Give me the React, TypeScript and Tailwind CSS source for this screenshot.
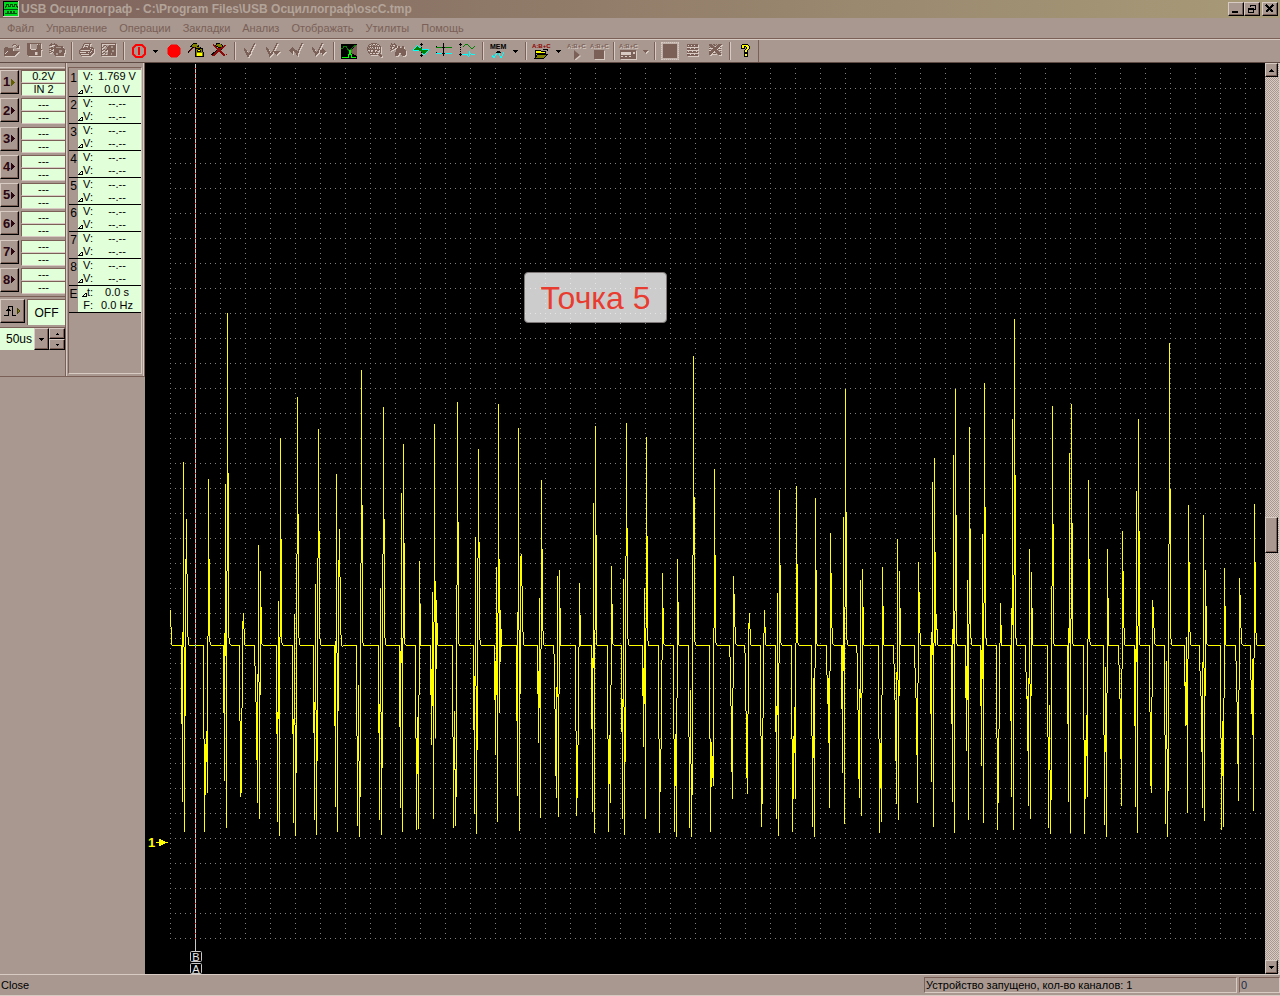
import { Fragment, type ReactNode } from "react";

const COLORS: Record<string, string> = {
  k: "#000000",
  r: "#8b0a0a",
  R: "#ff0000",
  y: "#ffff00",
  o: "#808000",
  g: "#008000",
  G: "#00ff00",
  c: "#00ffff",
  d: "#7b6058",
  l: "#d8cbc3",
  s: "#a8988f",
};

function pathsOf(rows: string[]) {
  const out: Record<string, string> = {};
  rows.forEach((row, y) => {
    let x = 0;
    while (x < row.length) {
      const ch = row[x];
      let end = x + 1;
      while (end < row.length && row[end] === ch) end++;
      if (ch !== ".") out[ch] = (out[ch] ?? "") + `M${x} ${y}h${end - x}v1h${x - end}z`;
      x = end;
    }
  });
  return out;
}

function Pix({ rows, etched = false }: { rows: string[]; etched?: boolean }) {
  const paths = pathsOf(rows);
  return (
    <g shapeRendering="crispEdges">
      {etched && (
        <g transform="translate(1 1)" fill={COLORS.l}>
          {Object.entries(paths).map(([k, d]) => (k === "d" ? <path key={k} d={d} /> : null))}
        </g>
      )}
      {Object.entries(paths).map(([k, d]) => (
        <path key={k} d={d} fill={COLORS[k]} />
      ))}
    </g>
  );
}

const OPEN = [
  "................",
  "..........ddd...",
  ".........d...d.d",
  "..............dd",
  "..ddd........ddd",
  ".ddddddddd......",
  ".ddddddddd......",
  ".ddddddddd......",
  ".ddd.ddddddddddd",
  ".dd.dddddddddddl",
  ".d.dddddddddddl.",
  ".ddddddddddddl..",
  ".dddddddddddl...",
];
const SAVE = [
  ".dddddddddddddd.",
  ".dddlssssssldsd.",
  ".dddlssssssdddd.",
  ".dddlssssssdddd.",
  ".dddlssssssdddd.",
  ".dddlssssssdddd.",
  ".ddddllllldddddd",
  ".dddddddddddddd.",
  ".dddddddddddddd.",
  ".ddddddddllsddd.",
  ".ddddddddllsddd.",
  ".ddddddddllsddd.",
  "..ddddddddddddd.",
];
const SAVES = [
  "..d..d..........",
  ".ddddddd........",
  "ddd...ddd.......",
  ".....ddddddddd..",
  "..dd.ddsssssdd..",
  "ddddddddddddddd.",
  "..dd.ddddddddddd",
  "dd...dddddsssddd",
  "..dd.dddddsssddd",
  "dd..ddddddssdddd",
  ".....ddssdddddd.",
  ".....ddssdddddd.",
  "......ddddddddd.",
];
const PRINT = [
  "......ddddddd...",
  ".....d.....d....",
  ".....d.ddd.d....",
  "....d.....dd....",
  "....d.ddd.ddddd.",
  "...ddddddddd.ddd",
  "..dddddddddddd.d",
  ".d..........dddd",
  ".dddddddddddd.dd",
  ".d......dd.d.ddd",
  ".dddddddddddddd.",
  "..d........ddd..",
  "...dddddddddd...",
];
const PREVIEW = [
  "ddddddddddddddd.",
  "d.............d.",
  "d..dd...ddddddd.",
  "d.d..d.dddssddd.",
  "dd....ddddssddd.",
  "d.....ddddddddd.",
  "d.dd.dddddddddd.",
  "dd..dd.ddddssdd.",
  "d......ddddssdd.",
  "d.dd...dddddddd.",
  "dd..d..dddsdddd.",
  "d......dddsdddd.",
  "ddddddddddddddd.",
];
const REC_SAVE = [
  ".....kkkk.......",
  "....koooo.......",
  "...kooooook.....",
  "..kkoooookk.....",
  "....kkrkooook...",
  "...kr..kkkkkkkk.",
  "..kr...kookkook.",
  ".kr....kokyykok.",
  "kr.....kokkkkok.",
  "k......koooooook",
  ".......koyyyyyok",
  ".......koyyyyyok",
  ".......koyyyyyok",
  ".......kkkkkkkkk",
];
const REC_CUT = [
  ".....kkkk.......",
  "..r..kooook.....",
  "..rrkooooook.rr.",
  "...rrkkooookrr..",
  "....rr.kkkrrr...",
  ".....rrrrrrr....",
  "......rrrrk.....",
  ".....krrrr......",
  "....krrrrrr.....",
  "..kkrrr..rrr....",
  ".kkrrr....rrr...",
  "kkrrr......rrr.r",
  ".rrr........rr..",
];
const CHECK = [
  "............d...",
  "...........dd...",
  "...........d....",
  "..........dd....",
  "..........d.....",
  "..d......dd.....",
  "..dd.....d......",
  "..ddd...dd......",
  "...dd...d.......",
  "...ddd.dd.......",
  "....ddddd.......",
  "....dddd........",
  ".....dd.........",
  ".....dd.........",
];
const CHECK_DOWN = [
  "...........dd...",
  "...........d....",
  "..........dd....",
  "..........d.....",
  ".d.......dd.....",
  ".dd......d......",
  ".ddd....dd......",
  "..dd....d.......",
  "..ddd..dddddddd.",
  "...dd.dd.ddddd..",
  "...ddddd..ddd...",
  "....ddd....d....",
  "....dd..........",
  "....d...........",
];
const CHECK_LEFT = [
  ".............dd.",
  ".............d..",
  "............dd..",
  "............d...",
  "....d......dd...",
  "...ddd.....d....",
  "..ddddd...dd....",
  ".dddddddd.d.....",
  "..ddd.ddddd.....",
  "...dd..dddd.....",
  "....d...dd......",
  "........dd......",
  ".........d......",
];
const CHECK_RIGHT = [
  "..........dd....",
  "..........d.....",
  ".........dd.....",
  ".........d......",
  ".d......dd......",
  ".dd.....d..d....",
  ".ddd...dd..dd...",
  "..dd...d.ddddd..",
  "..ddd.dd.dddddd.",
  "...ddddd.ddddd..",
  "....ddd....dd...",
  "....dd.....d....",
  "....d...........",
];
const GLOBE = [
  "....dddddd......",
  "..dd.d..d.dd....",
  ".d..d.dd.d..d...",
  ".ddddddddddddd..",
  "d.d.d.dd.d.d.d..",
  "dd.d.d.d.d.d.d..",
  "dddddddddddddd..",
  "d..d..dd..dd.d..",
  ".d.d..dd.d...d..",
  ".dddddddddd..d..",
  "..d..d..d...d...",
  "...ddddddd.ddd..",
  "............ddd.",
  ".............dd.",
];
const BINOC = [
  ".d..d...........",
  ".ddddd..........",
  "d.d..dd.........",
  "dddd.dd.dd..dd..",
  ".d..ddd.dd..dd..",
  "dd.dd..ddddddd..",
  ".dd...ddddddddd.",
  "d.....dddddddddd",
  "......dddddddddd",
  ".....ddddddddddd",
  ".....dddd..ddddd",
  ".....dddd..ddddd",
  ".....ddd....ddd.",
];
const WAVE_FILL = [
  "........k.......",
  ".......kkk......",
  "....c...k.......",
  "...cgc..........",
  "..cgggcck.......",
  ".cggggggg.......",
  "cggggggggccccccc",
  "ccccccgggggggggc",
  "........ggggggc.",
  "........kggggc..",
  ".........cggc...",
  "........k.cc....",
  ".......kkk......",
  "........k.......",
];
const AXIS_H = [
  ".......k........",
  ".......k........",
  ".......k........",
  "k......k........",
  "ggggggkkkggggggg",
  ".......k........",
  ".......k........",
  ".......k........",
  ".......k........",
  "k......k........",
  "cccccckkkccccccc",
  ".......k........",
  ".......k........",
];
const AXIS_V = [
  ".k..............",
  "kkk...ggg.......",
  ".k...g...g......",
  "....g.....g....g",
  ".k.........g..g.",
  "............gg..",
  ".k..............",
  "................",
  ".k........c.....",
  "..........c.....",
  ".k........cc....",
  "kkkcccccc.c.cccc",
  ".k......c.c.....",
  ".........c......",
];
const QUESTION = [
  "...kkkkkk...",
  "..kyyyyyyk..",
  "..kyykkyyyk.",
  "..kyyk.kyyk.",
  "..kkkk.kyyk.",
  "......kyyk..",
  ".....kyyk...",
  ".....kyyk...",
  ".....kkkk...",
  ".....kkkk...",
  ".....kyyk...",
  ".....kyyk...",
  ".....kkkk...",
];
const TABLE_ICON = [
  "................",
  "...ddddddddddd..",
  "...dlddlddlddd..",
  "...ddddddddddd..",
  "...lllllllllll..",
  "...dddldddlddd..",
  "...ddddddddddd..",
  "...lllllllllll..",
  "...dldddldddld..",
  "...ddddddddddd..",
  "...lllllllllll..",
  "...dddldddlddd..",
  "...ddddddddddd..",
];
const TABLE_X = [
  "................",
  "..ddd.dd.d.dddd.",
  "..dddd.dd.dddd..",
  "...dddd..dddd...",
  "..d.ddddddddld..",
  "..lll.ddddd.ll..",
  "..dd.ddddd.ddd..",
  "..l.ddddddd.ll..",
  "..ddddd.dddd.d..",
  "..dddd.l.dddd...",
  "..ddd.ddd.dddd..",
  "..dd.ll.ll.ddd..",
];

function Icon({ rows, etched }: { rows: string[]; etched?: boolean }) {
  return (
    <svg width="17" height="16" viewBox="0 0 17 16" className="shrink-0" aria-hidden="true">
      <Pix rows={rows} etched={etched} />
    </svg>
  );
}

function Tool({ label, children }: { label: string; children: ReactNode }) {
  return (
    <button type="button" aria-label={label} className="flex h-full w-[23px] shrink-0 items-center justify-center">
      {children}
    </button>
  );
}

function DropArrow({ label, dim = false }: { label: string; dim?: boolean }) {
  return (
    <button type="button" aria-label={label} className="flex h-full w-3 shrink-0 items-center justify-center">
      <svg width="6" height="5" viewBox="0 0 6 5" shapeRendering="crispEdges" aria-hidden="true">
        {dim && <path d="M1 2h5v1h-1v1h-1v1h-1v-1h-1v-1h-1z" fill="#d8cbc3" />}
        <path d="M0 1h5v1h-1v1h-1v1h-1v-1h-1v-1h-1z" fill={dim ? "#7b6058" : "#000"} />
      </svg>
    </button>
  );
}

function Sep({ wide = false }: { wide?: boolean }) {
  return (
    <span className={wide ? "flex w-2 shrink-0 justify-center" : "flex w-1.5 shrink-0 justify-center"}>
      <span className="h-[18px] w-0.5 border-l border-r border-l-[#7b6058] border-r-[#d8cbc3]" />
    </span>
  );
}

function AbcIcon({ color, children, etched = false }: { color: string; children: ReactNode; etched?: boolean }) {
  return (
    <svg width="21" height="17" viewBox="-1 0 21 17" className="shrink-0" aria-hidden="true">
      {etched && (
        <text x="1" y="6" fontSize="6" fontWeight="700" fontFamily="Liberation Sans, sans-serif" fill="#d8cbc3" aria-hidden="true">
          A:B+C
        </text>
      )}
      <text x="0" y="5" fontSize="6" fontWeight="700" fontFamily="Liberation Sans, sans-serif" fill={color}>
        A:B+C
      </text>
      {children}
    </svg>
  );
}

function Toolbar() {
  return (
    <div className="flex h-6 items-stretch border-b border-t border-b-[#5f4a44] border-t-[#d8cbc3]">
      <div className="flex items-center border-r border-[#7b6058] pr-0.5">
        <Tool label="Открыть"><Icon rows={OPEN} etched /></Tool>
        <Tool label="Сохранить"><Icon rows={SAVE} etched /></Tool>
        <Tool label="Сохранить все"><Icon rows={SAVES} etched /></Tool>
        <Sep />
        <Tool label="Печать"><Icon rows={PRINT} etched /></Tool>
        <Tool label="Просмотр"><Icon rows={PREVIEW} etched /></Tool>
        <Sep />
        <Tool label="Старт">
          <svg width="16" height="16" viewBox="0 0 16 16" fill="none" stroke="#ff0000" strokeWidth="2" aria-hidden="true">
            <path d="M5 2h6l3 3v6l-3 3H5l-3-3V5z" />
            <path d="M8 4v8" />
          </svg>
        </Tool>
        <DropArrow label="Режим старта" />
        <Tool label="Запись">
          <svg width="14" height="14" viewBox="0 0 14 14" aria-hidden="true">
            <path d="M4 1h6l3 3v6l-3 3H4l-3-3V4z" fill="#ff0000" stroke="#ff0000" />
          </svg>
        </Tool>
        <Tool label="Сохранить запись"><Icon rows={REC_SAVE} /></Tool>
        <Tool label="Удалить запись"><Icon rows={REC_CUT} /></Tool>
        <Sep wide />
        <Tool label="Закладка"><Icon rows={CHECK} etched /></Tool>
        <Tool label="Список закладок"><Icon rows={CHECK_DOWN} etched /></Tool>
        <Tool label="Предыдущая закладка"><Icon rows={CHECK_LEFT} etched /></Tool>
        <Tool label="Следующая закладка"><Icon rows={CHECK_RIGHT} etched /></Tool>
        <Sep />
        <Tool label="Спектр">
          <svg width="16" height="16" viewBox="0 0 16 16" shapeRendering="crispEdges" fill="none" aria-hidden="true">
            <path d="M0 1h16v15H0z" fill="#000" />
            <path d="M16 1v12L8 9z" fill="#7b6058" />
            <path d="M0 5h2l1-2h2l3 5h1l3-4 3-2" stroke="#008000" />
            <path d="M1 14.500h6V11h1V7h1v4h1v3.500h5" stroke="#00ff00" />
          </svg>
        </Tool>
        <span className="w-1 shrink-0" />
        <Tool label="Обзор"><Icon rows={GLOBE} etched /></Tool>
        <Tool label="Поиск"><Icon rows={BINOC} etched /></Tool>
        <Tool label="Сигнал"><Icon rows={WAVE_FILL} /></Tool>
        <Tool label="Горизонтальные оси"><Icon rows={AXIS_H} /></Tool>
        <Tool label="Вертикальные оси"><Icon rows={AXIS_V} /></Tool>
        <Sep wide />
        <Tool label="Память">
          <svg width="17" height="17" viewBox="0 0 17 17" className="shrink-0" aria-hidden="true">
            <text x="0" y="6" fontSize="7" fontWeight="700" fontFamily="Liberation Sans, sans-serif" fill="#000">MEM</text>
            <g shapeRendering="crispEdges" fill="none">
              <path d="M2 12l2 3 4-7 3 7 3-6" stroke="#00ffff" />
              <path d="M6 10h5v-1h-1v-1h-3v1h-1z" fill="#000" />
            </g>
          </svg>
        </Tool>
        <DropArrow label="Меню памяти" />
        <Sep wide />
        <Tool label="Открыть выражение">
          <AbcIcon color="#900000">
            <g shapeRendering="crispEdges">
              <path d="M3 7h5l1 1h4v2H3z" fill="#ffff00" stroke="#000" />
              <path d="M3 15V8" stroke="#000" />
              <path d="M3 15l3-4h10l-4 4z" fill="#808000" stroke="#000" />
              <path d="M11 6h4v2" fill="none" stroke="#000" />
            </g>
          </AbcIcon>
        </Tool>
        <DropArrow label="Меню выражений" />
        <Tool label="Запустить выражение">
          <AbcIcon color="#7b6058" etched>
            <path d="M8 8l6 5-6 5z" fill="#d8cbc3" />
            <path d="M7 7l6 5-6 5z" fill="#7b6058" />
          </AbcIcon>
        </Tool>
        <Tool label="Остановить выражение">
          <AbcIcon color="#7b6058" etched>
            <path d="M5 8h10v9H5z" fill="#d8cbc3" />
            <path d="M4 7h10v9H4z" fill="#7b6058" />
          </AbcIcon>
        </Tool>
        <Sep />
        <Tool label="Панель выражения">
          <AbcIcon color="#7b6058" etched>
            <g shapeRendering="crispEdges">
              <path d="M2 8h16v9H2z" fill="#d8cbc3" />
              <path d="M1 7h16v9H1z" fill="#7b6058" />
              <path d="M2 9h10v3H2zM14 9h2v2h-2zM2 13h2v1H2zM6 13h2v1H6zM10 13h2v1h-2z" fill="#d8cbc3" />
            </g>
          </AbcIcon>
        </Tool>
        <DropArrow label="Меню панели" dim />
        <Sep />
        <Tool label="Остановить">
          <span className="flex size-[18px] items-center justify-center border border-dotted border-[#d8cbc3] bg-[#c0b2aa]">
            <span className="size-3.5 bg-[#7b6058]" />
          </span>
        </Tool>
        <Tool label="Таблица"><Icon rows={TABLE_ICON} etched /></Tool>
        <Tool label="Очистить таблицу"><Icon rows={TABLE_X} etched /></Tool>
        <Sep />
        <Tool label="Справка">
          <svg width="12" height="14" viewBox="0 0 12 14" aria-hidden="true"><Pix rows={QUESTION} /></svg>
        </Tool>
      </div>
    </div>
  );
}

const RAISED =
  "border border-l-[#d8cbc3] border-t-[#d8cbc3] border-b-black border-r-black bg-[#a8988f] shadow-[inset_-1px_-1px_0_#7b6058]";

function TitleBar() {
  return (
    <header className="flex h-[18px] items-center bg-linear-to-r from-[#7e635d] to-[#a89b78] pl-[3px] pr-0.5">
      <svg width="16" height="16" viewBox="0 0 16 16" shapeRendering="crispEdges" className="shrink-0" aria-hidden="true">
        <path d="M0 0h16v16H0z" fill="#d8cbc3" />
        <path d="M0 0h15v15H0z" fill="#000" />
        <path d="M1 1h14v14H1z" fill="#00d820" />
        <path d="M2 7V5h1V3h2v2h2V3h2v2h2V3h2v2h1v2" fill="none" stroke="#004800" />
        <path d="M2 12.500h2v-2h1v2h2v-2h1v2h2v-2h1v2h3M1 8.500h14" fill="none" stroke="#005010" />
      </svg>
      <h1 className="ml-0.5 flex-1 truncate text-[12px] font-bold leading-[18px] text-[#b3a49a]">
        USB Осциллограф - C:\Program Files\USB Осциллограф\oscC.tmp
      </h1>
      <div className="flex">
        <button type="button" aria-label="Свернуть" className={`flex h-3.5 w-4 items-center justify-center ${RAISED}`}>
          <svg width="12" height="10" viewBox="0 0 12 10" shapeRendering="crispEdges"><path d="M2 7h6v2H2z" /></svg>
        </button>
        <button type="button" aria-label="Восстановить" className={`flex h-3.5 w-4 items-center justify-center ${RAISED}`}>
          <svg width="12" height="10" viewBox="0 0 12 10" shapeRendering="crispEdges" fill="none" stroke="#000">
            <path d="M4.500 3V1.500h5v4H8M4 1.500h6M2.500 4.500h5v4h-5zM2 5h6" />
          </svg>
        </button>
        <button type="button" aria-label="Закрыть" className={`ml-0.5 flex h-3.5 w-4 items-center justify-center ${RAISED}`}>
          <svg width="12" height="10" viewBox="0 0 12 10" shapeRendering="crispEdges" fill="none" stroke="#000" strokeWidth="1.500">
            <path d="M2 1l7 7M9 1L2 8" />
          </svg>
        </button>
      </div>
    </header>
  );
}

const MENU = ["Файл", "Управление", "Операции", "Закладки", "Анализ", "Отображать", "Утилиты", "Помощь"];

function MenuBar() {
  return (
    <nav className="flex h-[21px] items-center gap-3 border-b border-[#7b6058] px-[7px] text-[11px] leading-5 text-[#7b6058]">
      {MENU.map((m) => (
        <button key={m} type="button">{m}</button>
      ))}
    </nav>
  );
}

const CHANNELS = [
  { n: 1, range: "0.2V", input: "IN 2" },
  ...[2, 3, 4, 5, 6, 7, 8].map((n) => ({ n, range: "---", input: "---" })),
];

const CELL =
  "block h-[13px] w-full border-b border-l border-t border-b-[#d8cbc3] border-l-[#7b6058] border-t-[#7b6058] bg-[#e1ffd9] text-center text-[11px] leading-[11px]";

function ChannelPanel() {
  return (
    <section className="flex w-[66px] flex-col border-b border-r border-[#7b6058]">
      <div className="mt-1 h-[3px] shrink-0 border-b border-t border-b-[#7b6058] border-t-[#d8cbc3]" />
      <div className="flex h-[226px] flex-col">
        {CHANNELS.map((c) => (
          <div key={c.n} className="flex flex-1 items-start justify-between">
            <button type="button" className={`flex h-6 w-[19px] items-center justify-center gap-px text-[13px] font-bold text-[#2c0610] ${RAISED}`}>
              {c.n}
              <svg width="5" height="7" viewBox="0 0 5 7" shapeRendering="crispEdges" aria-hidden="true">
                <path d="M0 0l4 3.500L0 7z" fill={c.n === 1 ? "#606000" : "#2c0610"} />
              </svg>
            </button>
            <div className="w-11">
              <button type="button" aria-label={`Диапазон ${c.n}`} className={CELL}>{c.range}</button>
              <button type="button" aria-label={`Вход ${c.n}`} className={CELL}>{c.input}</button>
            </div>
          </div>
        ))}
      </div>
      <div className="flex items-start justify-between border-t border-[#7b6058] pt-0.5">
        <button type="button" aria-label="Синхронизация" className={`flex h-6 w-[25px] items-center justify-center ${RAISED}`}>
          <svg width="17" height="12" viewBox="0 0 17 12" shapeRendering="crispEdges" fill="none" stroke="#000" aria-hidden="true">
            <path d="M0 10.500h4.500V1.500h4v9H12M2 5.500h5M3 4.500h3" />
            <path d="M13 3l3 3-3 3z" fill="#808000" stroke="#404000" />
          </svg>
        </button>
        <button type="button" className="h-[26px] w-[38px] border-l border-t border-[#7b6058] bg-[#e1ffd9] text-[12px]">OFF</button>
      </div>
      <div className="mt-0.5 flex h-[23px] border-t border-[#7b6058]">
        <div className="relative flex h-[22px] w-[49px]">
          <select aria-label="Развёртка" className="w-full appearance-none bg-[#e1ffd9] pl-1.5 text-[12px]">
            <option>50us</option>
          </select>
          <span className={`pointer-events-none absolute right-0 top-0 flex h-full w-[15px] items-center justify-center ${RAISED}`}>
            <svg width="5" height="3" viewBox="0 0 5 3" shapeRendering="crispEdges"><path d="M0 0h5v1h-1v1h-1v1h-1v-1h-1v-1h-1z" /></svg>
          </span>
        </div>
        <div className="flex w-4 flex-col">
          <button type="button" aria-label="Больше" className={`flex flex-1 items-center justify-center ${RAISED}`}>
            <svg width="3" height="2" viewBox="0 0 3 2" shapeRendering="crispEdges"><path d="M1 0h1v1h1v1H0V1h1z" /></svg>
          </button>
          <button type="button" aria-label="Меньше" className={`flex flex-1 items-center justify-center ${RAISED}`}>
            <svg width="3" height="2" viewBox="0 0 3 2" shapeRendering="crispEdges"><path d="M0 0h3v1h-1v1h-1v-1h-1z" /></svg>
          </button>
        </div>
      </div>
    </section>
  );
}

const READOUTS = [
  { id: "1", first: "V:", value: "1.769 V", second: "V:", diff: "0.0 V" },
  ...["2", "3", "4", "5", "6", "7", "8"].map((id) => ({ id, first: "V:", value: "--.--", second: "V:", diff: "--.--" })),
  { id: "E", first: "t:", value: "0.0 s", second: "F:", diff: "0.0 Hz" },
];

function Label({ text, delta }: { text: string; delta: boolean }) {
  return (
    <span className="flex items-center justify-end">
      {delta && (
        <svg width="5" height="5" viewBox="0 0 5 5" className="mt-1" shapeRendering="crispEdges" aria-hidden="true">
          <path d="M0 4h5v1H0zM1 3h1v1H1zM2 2h1v1H2zM3 1h2v3H4V2H3z" />
        </svg>
      )}
      {text}
    </span>
  );
}

function ReadoutPanel() {
  return (
    <section className="w-[79px] border-b border-r border-[#7b6058] px-0.5 pb-0.5 pt-1 shadow-[inset_1px_0_0_#d8cbc3,inset_-1px_0_0_#d8cbc3]">
      <div className="h-full border border-b-[#d8cbc3] border-l-[#7b6058] border-r-[#d8cbc3] border-t-[#7b6058] pt-0.5">
        <table className="w-full border-separate border-spacing-0 text-[11px] leading-[13px]">
          <tbody>
            {READOUTS.map((r) => (
              <Fragment key={r.id}>
                <tr>
                  <th rowSpan={2} scope="rowgroup" className="w-[9px] border-b border-black p-0 pt-0.5 align-top text-[12px] font-normal">{r.id}</th>
                  <td className="w-[13px] bg-[#e1ffd9] p-0"><Label text={r.first} delta={r.id === "E"} /></td>
                  <td className="bg-[#e1ffd9] p-0 text-center">{r.value}</td>
                </tr>
                <tr>
                  <td className="border-b border-black bg-[#e1ffd9] p-0"><Label text={r.second} delta={r.id !== "E"} /></td>
                  <td className="border-b border-black bg-[#e1ffd9] p-0 text-center">{r.diff}</td>
                </tr>
              </Fragment>
            ))}
          </tbody>
        </table>
      </div>
    </section>
  );
}

/* Bursts of samples: first column, then one level per column. Idle level is 645. */
const IDLE = 645;
const BURSTS: number[][] = [
  [170, 610, 644],
  [182, 802, 462, 832, 599, 519, 629, 644, 646],
  [204, 832, 757, 731, 793, 479, 639],
  [224, 781, 484, 828, 313, 632, 643],
  [240, 797, 788, 628, 613],
  [255, 687, 717, 803, 545, 819, 571, 643],
  [277, 822, 601, 836, 438, 640],
  [293, 823, 614, 836, 710, 397, 631, 644],
  [314, 820, 584, 835, 686, 429, 633, 644],
  [335, 807, 474, 832, 590, 529, 625, 645, 646],
  [357, 826, 685, 837, 756, 370, 640, 646],
  [379, 820, 588, 835, 701, 407, 631, 644],
  [400, 808, 493, 832, 444, 642],
  [416, 830, 717, 829, 561, 646],
  [431, 745, 592, 819, 424, 738, 600],
  [453, 828, 711, 826, 768, 402, 642, 646],
  [474, 814, 537, 834, 666, 449, 635],
  [495, 755, 567, 822, 404, 713, 610, 647],
  [517, 796, 428, 831, 557, 554, 618],
  [538, 743, 598, 818, 480, 617, 644],
  [554, 663, 754, 798, 576, 817, 570, 646],
  [576, 816, 779, 710, 583, 646],
  [592, 812, 503, 833, 426, 644, 646],
  [608, 832, 735, 803, 566, 642],
  [622, 819, 579, 835, 689, 423, 633],
  [643, 747, 588, 819, 437, 635, 646],
  [659, 833, 751, 746, 573, 643],
  [674, 832, 734, 837, 559],
  [689, 828, 690, 837, 753, 356, 638],
  [710, 832, 742, 769, 786, 469, 641],
  [730, 668, 744, 799, 576, 612, 642],
  [745, 661, 761, 794, 633, 613, 644],
  [761, 827, 781, 655, 610, 644],
  [776, 819, 593, 836, 490, 640],
  [792, 832, 765, 707, 799, 486, 641],
  [812, 827, 678, 837, 498, 642, 646],
  [827, 704, 678, 808, 533, 613, 643],
  [842, 773, 517, 824, 389, 635],
  [857, 661, 759, 798, 580, 816, 569],
  [879, 833, 743, 822, 567],
  [894, 682, 718, 804, 539, 820, 571, 644],
  [915, 690, 706, 803, 562, 622, 644],
  [931, 782, 482, 827, 458, 646, 614, 644],
  [952, 802, 455, 833, 389, 641, 646],
  [966, 751, 580, 820, 427, 631],
  [981, 766, 534, 823, 383, 631, 644],
  [997, 830, 776, 682, 603, 646],
  [1011, 797, 419, 830, 319, 631, 644],
  [1026, 699, 696, 806, 549, 819, 572, 644],
  [1048, 828, 705, 834, 766, 406, 642, 646],
  [1068, 802, 453, 833, 404, 642, 646],
  [1084, 834, 764, 715, 797, 480, 638],
  [1104, 825, 667, 837, 549, 646],
  [1119, 685, 712, 806, 531, 611, 644],
  [1135, 807, 491, 833, 419, 643, 646],
  [1150, 779, 793, 600, 614, 642],
  [1165, 824, 661, 837, 745, 343, 634, 644],
  [1185, 726, 637, 813, 505, 619],
  [1200, 696, 696, 808, 515, 821, 570, 642],
  [1221, 830, 721, 827, 568, 644],
  [1236, 677, 727, 801, 578, 612, 643],
  [1251, 714, 659, 811, 504, 620],
];

function tracePath() {
  const level = new Map<number, number>();
  BURSTS.forEach(([start, ...vals]) => vals.forEach((v, i) => level.set(start + i, v)));
  const at = (x: number) => level.get(x) ?? IDLE;
  let d = "";
  for (let x = 170; x < 1265; x++) {
    const y = at(x);
    const before = x === 170 ? y : Math.round((at(x - 1) + y) / 2);
    const after = Math.round((at(x + 1) + y) / 2);
    const top = Math.min(before, y, after);
    const bottom = Math.max(before, y, after, top + 1);
    d += `M${x} ${top}h1V${bottom}h-1z`;
  }
  return d;
}

const COLS = Array.from({ length: 44 }, (_, i) => 170 + i * 25);
const LINES = Array.from({ length: 35 }, (_, i) => 88 + i * 25);

function Marker({ y, text }: { y: number; text: string }) {
  return (
    <g>
      <rect x="190.500" y={y + 0.5} width="11" height="10" rx="1" fill="#000" stroke="#c8c8c8" />
      <text x="196" y={y + 9.5} textAnchor="middle" fontSize="11" fill="#e8e8e8" fontFamily="Liberation Sans, sans-serif">
        {text}
      </text>
    </g>
  );
}

function Plot() {
  return (
    <main className="relative min-w-0 flex-1 overflow-hidden bg-black">
      <svg width="1120" height="911" viewBox="145 63 1120 911" className="block max-w-none" role="img" aria-label="Осциллограмма">
        <g shapeRendering="crispEdges" fill="none">
          <g stroke="#808080" strokeDasharray="1 4">
            {COLS.map((x) => <path key={x} d={`M${x + 0.5} 68V939`} />)}
            {LINES.map((y) => <path key={y} d={`M170 ${y + 0.5}H1265`} />)}
          </g>
          <path d="M195.500 64V951" stroke="#c8c8c8" />
          <path d="M195.500 68V939" stroke="#ff0000" strokeDasharray="1 4" />
          <path d={tracePath()} fill="#ffff00" />
          <path d="M195 645h1v1h-1z" fill="#00ffff" />
          <path d="M156 842h12v1h-12zM159 839h2v1h2v1h2v1h2v1h-2v1h-2v1h-2v1h-2z" fill="#ffff00" />
        </g>
        <text x="148" y="847" fontSize="13" fontWeight="700" fill="#ffff00" fontFamily="Liberation Sans, sans-serif">1</text>
        <Marker y={951} text="B" />
        <Marker y={963} text="A" />
      </svg>
      <div className="absolute left-[379px] top-[209px] flex h-[51px] w-[143px] items-center justify-center rounded border border-[#7d7777] bg-white/80 text-[32px] leading-none text-[#e93c30]">
        Точка 5
      </div>
    </main>
  );
}

function ScrollBar() {
  return (
    <aside className="flex w-[15px] shrink-0 flex-col border-r border-[#d8cbc3] bg-[#a8988f] bg-[conic-gradient(#d8cbc3_25%,#a8988f_0_50%,#d8cbc3_0_75%,#a8988f_0)] bg-size-[2px_2px] pr-px">
      <button type="button" aria-label="Вверх" className={`flex h-3.5 items-center justify-center ${RAISED}`}>
        <svg width="5" height="3" viewBox="0 0 5 3" shapeRendering="crispEdges"><path d="M2 0h1v1h1v1h1v1H0V2h1V1h1z" /></svg>
      </button>
      <div className="flex flex-1 flex-col">
        <span className="flex-[52]" />
        <button type="button" aria-label="Ползунок" className={`h-9 shrink-0 ${RAISED}`} />
        <span className="flex-[48]" />
      </div>
      <button type="button" aria-label="Вниз" className={`flex h-3.5 items-center justify-center ${RAISED}`}>
        <svg width="5" height="3" viewBox="0 0 5 3" shapeRendering="crispEdges"><path d="M0 0h5v1h-1v1h-1v1h-1v-1h-1v-1h-1z" /></svg>
      </button>
    </aside>
  );
}

function StatusBar() {
  const box = "h-4 border border-b-[#d8cbc3] border-l-[#7b6058] border-r-[#d8cbc3] border-t-[#7b6058] px-px leading-[14px]";
  return (
    <footer className="flex h-[22px] items-center gap-0.5 border-b border-t border-[#d8cbc3] text-[11px]">
      <span className="flex-1 pl-px">Close</span>
      <span className={`w-[313px] ${box}`}>Устройство запущено, кол-во каналов: 1</span>
      <span className={`w-[41px] text-[#1c2c4c] ${box}`}>0</span>
    </footer>
  );
}

export default function App() {
  return (
    <div className="flex min-h-screen flex-col bg-[#a8988f] font-['Liberation_Sans',Arial,sans-serif] text-black">
      <TitleBar />
      <MenuBar />
      <Toolbar />
      <div className="flex flex-1">
        <div className="flex shrink-0 items-start">
          <div className="flex h-[314px]">
            <ChannelPanel />
            <ReadoutPanel />
          </div>
        </div>
        <Plot />
        <ScrollBar />
      </div>
      <StatusBar />
    </div>
  );
}
